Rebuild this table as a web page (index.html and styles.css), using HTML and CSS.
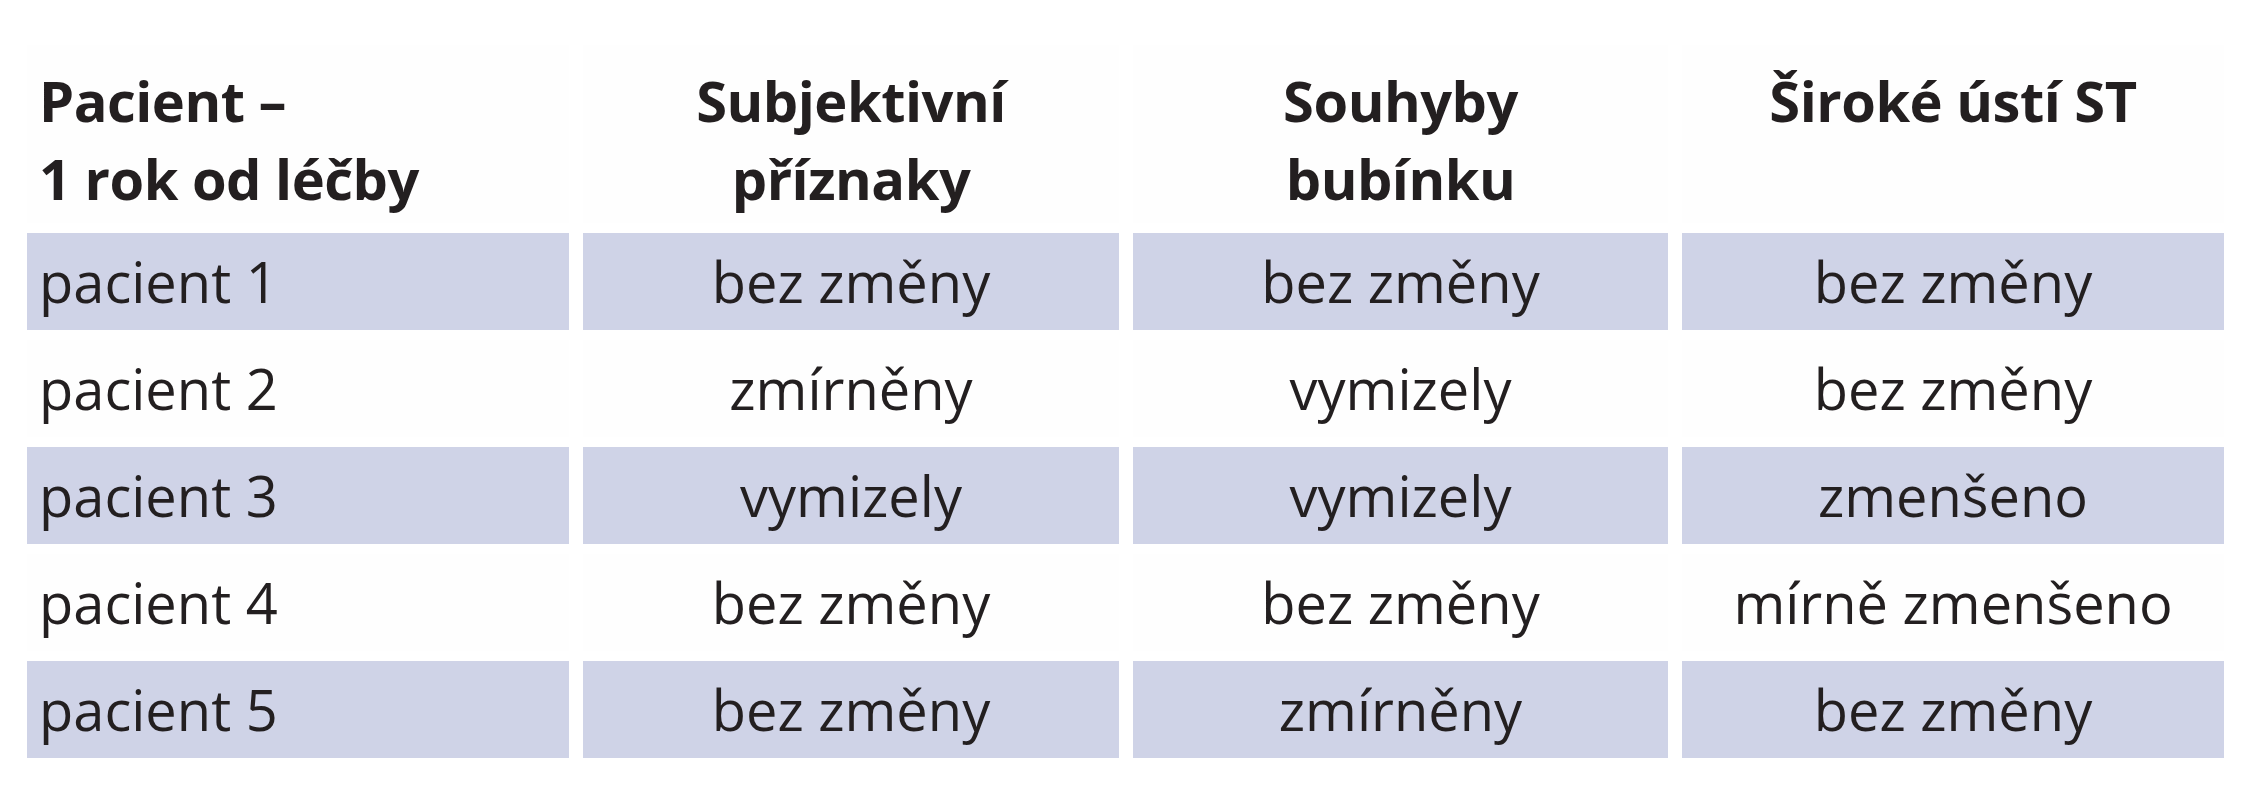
FILE: index.html
```html
<!DOCTYPE html>
<html lang="cs">
<head>
<meta charset="utf-8">
<title>Pacient – 1 rok od léčby</title>
<link rel="stylesheet" href="styles.css">
</head>
<body>
<div class="table">
  <div class="cell head first">Pacient –<br>1 rok od léčby</div>
  <div class="cell head">Subjektivní<br>příznaky</div>
  <div class="cell head">Souhyby<br>bubínku</div>
  <div class="cell head">Široké ústí ST</div>

  <div class="cell band first">pacient 1</div>
  <div class="cell band">bez změny</div>
  <div class="cell band">bez změny</div>
  <div class="cell band">bez změny</div>

  <div class="cell plain first">pacient 2</div>
  <div class="cell plain">zmírněny</div>
  <div class="cell plain">vymizely</div>
  <div class="cell plain">bez změny</div>

  <div class="cell band first">pacient 3</div>
  <div class="cell band">vymizely</div>
  <div class="cell band">vymizely</div>
  <div class="cell band">zmenšeno</div>

  <div class="cell plain first">pacient 4</div>
  <div class="cell plain">bez změny</div>
  <div class="cell plain">bez změny</div>
  <div class="cell plain">mírně zmenšeno</div>

  <div class="cell band first">pacient 5</div>
  <div class="cell band">bez změny</div>
  <div class="cell band">zmírněny</div>
  <div class="cell band">bez změny</div>
</div>
</body>
</html>
```

FILE: styles.css
```css
html, body {
  margin: 0;
  padding: 0;
  background: #ffffff;
}

body {
  font-family: "Open Sans", "Noto Sans", sans-serif;
  color: #231f20;
}

.table {
  display: grid;
  grid-template-columns: 542px 536px 535px 542px;
  grid-template-rows: 178px repeat(5, 97px);
  column-gap: 14px;
  row-gap: 10px;
  padding: 45px 0 0 27px;
}

.cell {
  display: flex;
  align-items: center;
  justify-content: center;
  text-align: center;
  font-size: 56px;
  line-height: 1.362;
  white-space: nowrap;
}

.cell.first {
  justify-content: flex-start;
  text-align: left;
  padding-left: 12px;
}

.head {
  align-items: flex-start;
  font-weight: 700;
  line-height: 78px;
  padding-top: 16px;
  background: #fefefe;
  letter-spacing: -0.5px;
}

.band {
  background: #cfd3e7;
}

.plain {
  background: #fefefe;
}
```
